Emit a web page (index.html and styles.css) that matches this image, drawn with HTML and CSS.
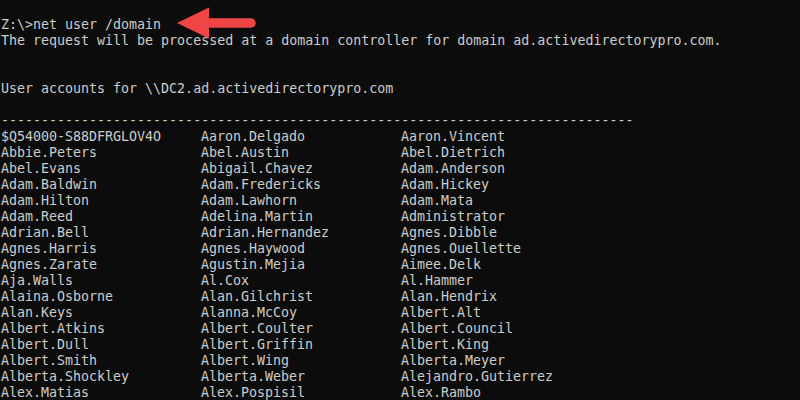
FILE: index.html
```html
<!DOCTYPE html>
<html>
<head>
<meta charset="utf-8">
<link rel="stylesheet" href="styles.css">
</head>
<body>
<div class="console">
  <div class="line">Z:\&gt;net user /domain</div>
  <div class="line">The request will be processed at a domain controller for domain ad.activedirectorypro.com.</div>
  <div class="line"> </div>
  <div class="line"> </div>
  <div class="line">User accounts for \\DC2.ad.activedirectorypro.com</div>
  <div class="line"> </div>
  <div class="line">-------------------------------------------------------------------------------</div>
  <div class="accounts">
    <span>$Q54000-S88DFRGLOV4O</span><span>Aaron.Delgado</span><span>Aaron.Vincent</span>
    <span>Abbie.Peters</span><span>Abel.Austin</span><span>Abel.Dietrich</span>
    <span>Abel.Evans</span><span>Abigail.Chavez</span><span>Adam.Anderson</span>
    <span>Adam.Baldwin</span><span>Adam.Fredericks</span><span>Adam.Hickey</span>
    <span>Adam.Hilton</span><span>Adam.Lawhorn</span><span>Adam.Mata</span>
    <span>Adam.Reed</span><span>Adelina.Martin</span><span>Administrator</span>
    <span>Adrian.Bell</span><span>Adrian.Hernandez</span><span>Agnes.Dibble</span>
    <span>Agnes.Harris</span><span>Agnes.Haywood</span><span>Agnes.Ouellette</span>
    <span>Agnes.Zarate</span><span>Agustin.Mejia</span><span>Aimee.Delk</span>
    <span>Aja.Walls</span><span>Al.Cox</span><span>Al.Hammer</span>
    <span>Alaina.Osborne</span><span>Alan.Gilchrist</span><span>Alan.Hendrix</span>
    <span>Alan.Keys</span><span>Alanna.McCoy</span><span>Albert.Alt</span>
    <span>Albert.Atkins</span><span>Albert.Coulter</span><span>Albert.Council</span>
    <span>Albert.Dull</span><span>Albert.Griffin</span><span>Albert.King</span>
    <span>Albert.Smith</span><span>Albert.Wing</span><span>Alberta.Meyer</span>
    <span>Alberta.Shockley</span><span>Alberta.Weber</span><span>Alejandro.Gutierrez</span>
    <span>Alex.Matias</span><span>Alex.Pospisil</span><span>Alex.Rambo</span>
  </div>
  <svg class="arrow" width="90" height="40" viewBox="170 4 90 40" aria-hidden="true">
    <polygon points="177,23 209,7.5 209,38.5" fill="#ef4545"/>
    <line x1="206" y1="23" x2="251" y2="23" stroke="#ef4545" stroke-width="9.5" stroke-linecap="round"/>
  </svg>
</div>
</body>
</html>
```

FILE: styles.css
```css
html, body {
  margin: 0;
  padding: 0;
  background: #0c0c0c;
}

.console {
  position: relative;
  width: 800px;
  height: 400px;
  overflow: hidden;
  box-sizing: border-box;
  padding: 17px 0 0 1px;
  background: #0c0c0c;
  color: #cccccc;
  font-family: "DejaVu Sans Mono", "Liberation Mono", monospace;
  font-size: 13.3px;
  line-height: 16px;
}

.line {
  height: 16px;
  white-space: pre;
}

.accounts {
  display: grid;
  grid-template-columns: 200px 200px 200px;
  grid-auto-rows: 16px;
  white-space: pre;
}

.arrow {
  position: absolute;
  left: 170px;
  top: 4px;
  display: block;
}
```
